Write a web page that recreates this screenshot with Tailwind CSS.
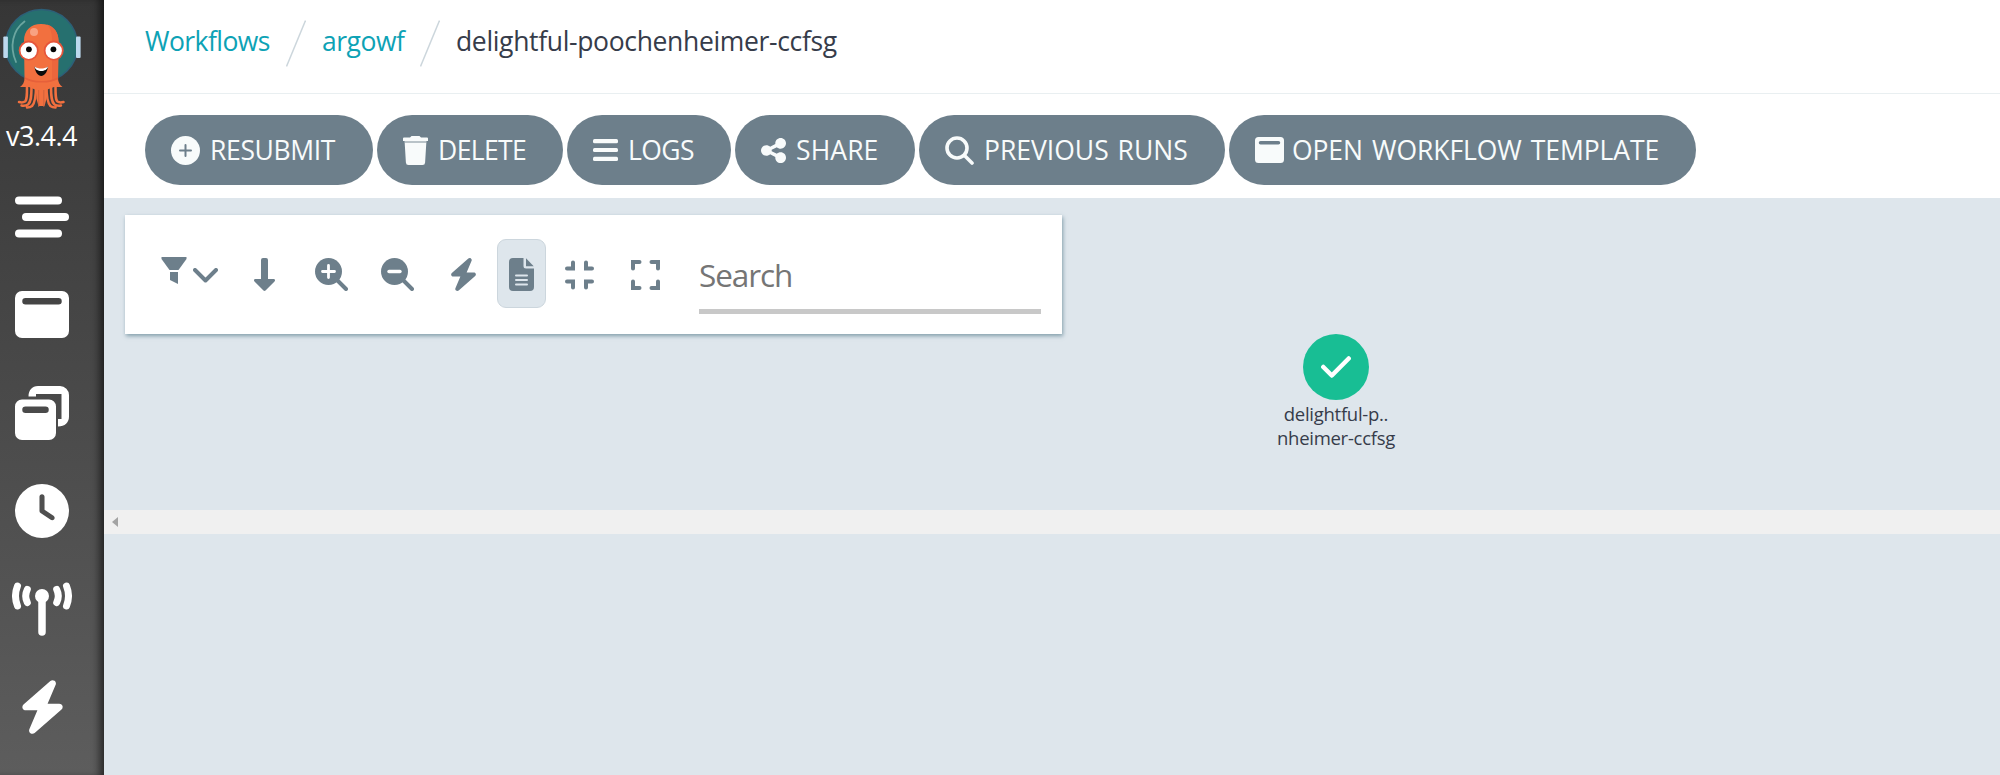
<!DOCTYPE html>
<html lang="en">
<head>
    <meta charset="UTF-8">
    <meta name="viewport" content="width=device-width, initial-scale=1.0">
    <title>Argo Workflows</title>
    <script src="https://cdn.jsdelivr.net/npm/@tailwindcss/browser@4"></script>
</head>
<body class="flex h-screen overflow-hidden bg-[#dee6ec] font-['Open_Sans','Noto_Sans',sans-serif] text-[#363c4a]">

<!-- Sidebar -->
<nav class="flex w-[104px] shrink-0 flex-col bg-linear-to-b from-[#363636] to-[#5d5d5d] text-white shadow-[inset_-8px_0_8px_-4px_rgba(0,0,0,0.6)]">
    <a href="#" class="h-[118px]">
        <svg class="h-[118px] w-[86px]" viewBox="0 0 86 118">
            <circle cx="41.5" cy="45.5" r="36" fill="#26706f" stroke="#2d5f78" stroke-width="1.5"/>
            <rect x="3.3" y="36.5" width="4.600" height="21.500" rx="1" fill="#bcd9ee"/>
            <rect x="76" y="36.5" width="4.600" height="21.500" rx="1" fill="#bcd9ee"/>
            <path d="M24.500 21.500C13 30 9 46 16 62" fill="none" stroke="#6ba6a0" stroke-width="1.800" stroke-linecap="round"/>
            <path d="M24 41C24 30 31 24 41 24s17.500 6 17.500 17L58 78c0 4 1.500 7 4.500 9H54L41 92 29 87h-9c3-2 4.500-5 4.500-9z" fill="#f2703f"/>
            <!-- Tentacles -->
            <path d="M27 86c0 9 0 14-2 15.500-1.500 1-4 1-6 .5M31.500 86c0 11-.5 16-3.500 18.500-1.500 1-4 1.500-6.500 1M36 86c0 12-1 17-4 20-1.500 1.200-3 1.500-5 1.500M55.500 86c0 9 0 14 2 15.500 1.500 1 4 1 6 .5M51 86c0 11 .5 16 3.500 18.500 1.500 1 4 1.500 6.500 1M46.500 86c0 12 1 17 4 20 1.500 1.200 3 1.500 5 1.500" fill="none" stroke="#f2703f" stroke-width="2.500" stroke-linecap="round"/>
            <path d="M36 86h10.500v13l-2 7h-6l-2-7z" fill="#f2703f"/>
            <path d="M38.700 90v17M43.800 90v17" stroke="#c8603c" stroke-width=".8"/>
            <path d="M47 24.500C55 27 58.500 33 58.500 41L58 80H52V40C52 33 50.500 28 47 24.500z" fill="#ec663c"/>
            <path d="M25 78c8 5 25 5 33 0" fill="none" stroke="#e6603a" stroke-width="1.500"/>
            <circle cx="34" cy="32" r="4" fill="#f8a282"/>
            <circle cx="28.700" cy="50.500" r="10" fill="#e6553a"/>
            <circle cx="53.700" cy="50.500" r="10" fill="#e6553a"/>
            <circle cx="28.700" cy="50.800" r="8.200" fill="#fff"/>
            <circle cx="53.700" cy="50.800" r="8.200" fill="#fff"/>
            <circle cx="28.900" cy="49.300" r="2.900" fill="#050505"/>
            <circle cx="53.400" cy="49.300" r="2.900" fill="#050505"/>
            <path d="M34.500 66.500C36 79 46.500 79 48 66.500 44 70.500 38.500 70.500 34.500 66.500z" fill="#0c0c0c"/>
            <path d="M34.500 66.500c1 6 12.500 6 13.500 0-4 2.800-9.500 2.800-13.500 0z" fill="#fff"/>
        </svg>
    </a>
    <div class="h-[50px] pl-[6px] text-[27px] leading-[36px] tracking-[-0.5px]">v3.4.4</div>
    <a href="#" class="flex h-[98px] w-[84px] items-center justify-center">
        <svg class="size-[54px]" viewBox="0 0 54 54" fill="currentColor"><rect x="0" y="6.500" width="47" height="8" rx="4"/><rect x="7" y="23" width="47" height="8" rx="4"/><rect x="0" y="39.500" width="47" height="8" rx="4"/></svg>
    </a>
    <a href="#" class="flex h-[98px] w-[84px] items-center justify-center">
        <svg class="size-[54px]" viewBox="0 0 54 54" fill="currentColor" fill-rule="evenodd"><path d="M7 3h40a7 7 0 0 1 7 7v33a7 7 0 0 1-7 7H7a7 7 0 0 1-7-7V10a7 7 0 0 1 7-7zM10.500 10a3.200 3.200 0 0 0 0 6.500h33a3.200 3.200 0 0 0 0-6.500z"/></svg>
    </a>
    <a href="#" class="flex h-[98px] w-[84px] items-center justify-center">
        <svg class="size-[54px]" viewBox="0 0 54 54" fill="currentColor" fill-rule="evenodd"><path d="M7 13.500h27a7 7 0 0 1 7 7V47a7 7 0 0 1-7 7H7a7 7 0 0 1-7-7V20.500a7 7 0 0 1 7-7zM10.500 20.500a3.200 3.200 0 0 0 0 6.500h20a3.200 3.200 0 0 0 0-6.500z"/><path d="M13.500 10.500C13.500 4.500 17 0 23 0h22a9 9 0 0 1 9 9v21.500c0 6-4 10-11 10v-7.500h3.500V8H21v2.500z"/></svg>
    </a>
    <a href="#" class="flex h-[98px] w-[84px] items-center justify-center">
        <svg class="size-[54px]" viewBox="0 0 512 512" fill="currentColor"><path d="M256 0a256 256 0 1 1 0 512A256 256 0 1 1 256 0zM232 120l0 136c0 8 4 15.500 10.700 20l96 64c11 7.400 25.900 4.400 33.300-6.700s4.400-25.900-6.700-33.300L280 243.200 280 120c0-13.300-10.700-24-24-24s-24 10.700-24 24z"/></svg>
    </a>
    <a href="#" class="flex h-[98px] w-[84px] items-center justify-center">
        <svg class="h-[54px] w-[60px]" viewBox="0 0 60 54" fill="none" stroke="currentColor" stroke-linecap="round"><circle cx="30" cy="14" r="7" fill="currentColor" stroke="none"/><path d="M30 14v36" stroke-width="7.500"/><path d="M15.300 7.500q-3.200 6.500 0 13M44.700 7.500q3.200 6.500 0 13" stroke-width="7"/><path d="M5.500 4q-4 10 0 20M54.500 4q4 10 0 20" stroke-width="7"/></svg>
    </a>
    <a href="#" class="flex h-[98px] w-[84px] items-center justify-center">
        <svg class="h-[54px] w-[47px]" viewBox="0 0 448 512" fill="currentColor"><path d="M349.400 44.600c5.900-13.700 1.500-29.700-10.600-38.500s-28.600-8-39.900 1.800l-256 224c-10 8.800-13.600 22.900-8.900 35.300S50.700 288 64 288l111.500 0L98.600 467.400c-5.900 13.700-1.500 29.700 10.600 38.500s28.600 8 39.900-1.800l256-224c10-8.800 13.600-22.900 8.900-35.300s-16.600-20.700-30-20.700l-111.500 0L349.400 44.600z"/></svg>
    </a>
</nav>

<main class="min-w-0 flex-1">
    <!-- Breadcrumbs -->
    <div class="flex h-[94px] items-start border-b border-[#e9eff1] bg-white pl-[41px] pt-5 text-[26.5px] leading-[42px]">
        <a href="#" class="w-[141px] whitespace-nowrap tracking-[-0.55px] text-[#0da2b5]">Workflows</a>
        <svg class="h-[47px] w-5" viewBox="0 0 20 47" stroke="#ccd6dc" stroke-width="1.500"><path d="M.5 46.500L19.500.5"/></svg>
        <a href="#" class="ml-4 w-[98px] whitespace-nowrap tracking-[-0.5px] text-[#0da2b5]">argowf</a>
        <svg class="h-[47px] w-5" viewBox="0 0 20 47" stroke="#ccd6dc" stroke-width="1.500"><path d="M.5 46.500L19.500.5"/></svg>
        <span class="ml-4 whitespace-nowrap tracking-[-0.34px]">delightful-poochenheimer-ccfsg</span>
    </div>

    <!-- Action buttons -->
    <div class="flex h-[104px] gap-1 bg-white pl-[41px] pt-[21px] text-[26.5px] text-[#f8fbfb]">
        <button class="flex h-[70px] w-[228px] items-center rounded-full bg-[#6d7f8b] pl-[26px]">
            <svg class="mr-2.5 size-[29px]" viewBox="0 0 29 29"><circle cx="14.500" cy="14.500" r="14.500" fill="currentColor"/><path d="M14.500 9v11M9 14.500h11" stroke="#6d7f8b" stroke-width="2" stroke-linecap="round"/></svg>
            <span class="whitespace-nowrap pt-0.5 tracking-[-0.35px]">RESUBMIT</span>
        </button>
        <button class="flex h-[70px] w-[186px] items-center rounded-full bg-[#6d7f8b] pl-[26px]">
            <svg class="mr-2.5 h-[29px] w-[25px]" viewBox="0 0 25 29" fill="currentColor"><path d="M8.500 0h8l1.500 1.500h6a1 1 0 0 1 1 1V5H0V2.500a1 1 0 0 1 1-1h6z"/><path d="M1.500 5h22v2h-22z" opacity=".55"/><path d="M1.700 7h21.600l-1.200 19.500a2.600 2.600 0 0 1-2.600 2.500h-14a2.600 2.600 0 0 1-2.600-2.500z"/></svg>
            <span class="whitespace-nowrap pt-0.5 tracking-[-0.6px]">DELETE</span>
        </button>
        <button class="flex h-[70px] w-[164px] items-center rounded-full bg-[#6d7f8b] pl-[26px]">
            <svg class="mr-2.5 h-[22px] w-[25px]" viewBox="0 0 25 22" fill="currentColor"><rect width="25" height="4.200" rx="1.500"/><rect y="8.900" width="25" height="4.200" rx="1.500"/><rect y="17.800" width="25" height="4.200" rx="1.500"/></svg>
            <span class="whitespace-nowrap pt-0.5 tracking-[-0.6px]">LOGS</span>
        </button>
        <button class="flex h-[70px] w-[180px] items-center rounded-full bg-[#6d7f8b] pl-[26px]">
            <svg class="mr-2.5 h-[29px] w-[25px]" viewBox="0 0 448 512" fill="currentColor"><path d="M352 224c53 0 96-43 96-96s-43-96-96-96s-96 43-96 96c0 4 .2 8 .7 11.900l-94.100 47C145.400 170.200 121.900 160 96 160c-53 0-96 43-96 96s43 96 96 96c25.900 0 49.400-10.200 66.600-26.900l94.100 47c-.5 3.900-.7 7.800-.7 11.900c0 53 43 96 96 96s96-43 96-96s-43-96-96-96c-25.900 0-49.400 10.200-66.600 26.900l-94.100-47c.5-3.900 .7-7.800 .7-11.900s-.2-8-.7-11.900l94.100-47C302.600 213.800 326.100 224 352 224z"/></svg>
            <span class="whitespace-nowrap pt-0.5 tracking-[0.1px]">SHARE</span>
        </button>
        <button class="flex h-[70px] w-[306px] items-center rounded-full bg-[#6d7f8b] pl-[26px]">
            <svg class="mr-2.5 size-[29px]" viewBox="0 0 29 29" fill="none" stroke="currentColor" stroke-width="3.600" stroke-linecap="round"><circle cx="12" cy="12" r="10"/><path d="M19.500 19.500l7.500 7.500"/></svg>
            <span class="whitespace-nowrap pt-0.5 tracking-[0px] [word-spacing:2px]">PREVIOUS RUNS</span>
        </button>
        <button class="flex h-[70px] w-[467px] items-center rounded-full bg-[#6d7f8b] pl-[26px]">
            <svg class="mr-2 h-[26px] w-[29px]" viewBox="0 0 29 26" fill="currentColor" fill-rule="evenodd"><path d="M3.500 0h22A3.500 3.500 0 0 1 29 3.500v19a3.500 3.500 0 0 1-3.500 3.500h-22A3.500 3.500 0 0 1 0 22.500v-19A3.500 3.500 0 0 1 3.500 0zM5.500 4a1.700 1.700 0 0 0 0 3.500h18a1.700 1.700 0 0 0 0-3.500z"/></svg>
            <span class="whitespace-nowrap pt-0.5 tracking-[-0.1px] [word-spacing:2.500px]">OPEN WORKFLOW TEMPLATE</span>
        </button>
    </div>

    <!-- Workflow graph -->
    <div class="relative h-[312px]">
        <div class="ml-[21px] flex h-[136px] w-[937px] pt-[17px]">
            <div class="flex h-[119px] w-full bg-white pl-9 text-[#6d7f8b] shadow-[1px_2px_4px_rgba(100,135,150,0.75)]">
                <a href="#" class="mt-[41px] flex w-[93px]">
                    <svg class="h-[29px] w-[26px]" viewBox="0 0 26 29" fill="currentColor"><path d="M.5 1h25v2L17.500 14h-9L.5 3z"/><path d="M9 16h8v12l-8-4z"/></svg>
                    <svg class="ml-1.5 mt-[12px] h-[15px] w-[25px]" viewBox="0 0 25 15" fill="none" stroke="currentColor" stroke-width="4" stroke-linecap="round" stroke-linejoin="round"><path d="M2 2l10.500 10.500L23 2"/></svg>
                </a>
                <a href="#" class="mt-[43px] w-[61px]">
                    <svg class="h-[33px] w-[21px]" viewBox="0 0 21 33" fill="currentColor"><path d="M9 0h3a2 2 0 0 1 2 2v19h5.500c1.500 0 2 1.500 1 2.500l-9 9a1.500 1.500 0 0 1-2 0l-9-9c-1-1-.5-2.500 1-2.500H7V2a2 2 0 0 1 2-2z"/></svg>
                </a>
                <a href="#" class="mt-[43px] w-[66px]">
                    <svg class="size-[33px]" viewBox="0 0 33 33"><circle cx="13.500" cy="13.500" r="13.500" fill="currentColor"/><path d="M21 21l10 10" stroke="currentColor" stroke-width="4" stroke-linecap="round"/><path d="M13.500 7.500v12M7.500 13.500h12" stroke="#fff" stroke-width="2.800" stroke-linecap="round"/></svg>
                </a>
                <a href="#" class="mt-[43px] w-[70px]">
                    <svg class="size-[33px]" viewBox="0 0 33 33"><circle cx="13.500" cy="13.500" r="13.500" fill="currentColor"/><path d="M21 21l10 10" stroke="currentColor" stroke-width="4" stroke-linecap="round"/><path d="M8 13.500h11" stroke="#fff" stroke-width="3.400" stroke-linecap="round"/></svg>
                </a>
                <a href="#" class="mt-[43px] w-[46px]">
                    <svg class="-ml-0.5 h-[33px] w-[29px]" viewBox="0 0 448 512" fill="currentColor"><path d="M349.400 44.600c5.900-13.700 1.500-29.700-10.600-38.500s-28.600-8-39.900 1.800l-256 224c-10 8.800-13.600 22.900-8.900 35.300S50.700 288 64 288l111.500 0L98.600 467.400c-5.900 13.700-1.500 29.700 10.600 38.500s28.600 8 39.900-1.800l256-224c10-8.800 13.600-22.900 8.900-35.300s-16.600-20.700-30-20.700l-111.500 0L349.400 44.600z"/></svg>
                </a>
                <a href="#" class="mt-6 flex h-[69px] w-[49px] items-center justify-center rounded-[9px] border border-[#ccd6dd] bg-[#dee6ec] pt-0.5">
                    <svg class="h-[33px] w-[25px]" viewBox="0 0 25 33" fill="currentColor"><path d="M4 0h10.500v8a2.500 2.500 0 0 0 2.500 2.500h8V29a4 4 0 0 1-4 4H4a4 4 0 0 1-4-4V4a4 4 0 0 1 4-4z"/><path d="M17 .3l7.700 7.900H17z"/><path d="M7 17.500h11M7 22h11M7 26.500h11" stroke="#dee6ec" stroke-width="2" stroke-linecap="round"/></svg>
                </a>
                <a href="#" class="ml-[19px] mt-[45px] w-[66px]">
                    <svg class="h-[30px] w-[29px]" viewBox="0 0 29 30" fill="none" stroke="currentColor" stroke-width="4" stroke-linecap="round"><path d="M8 2.500V8.500H2M21 2.500V8.500h6M8 27.500V21.500H2M21 27.500V21.500h6"/></svg>
                </a>
                <a href="#" class="mt-[45px] w-[68px]">
                    <svg class="h-[30px] w-[29px]" viewBox="0 0 29 30" fill="none" stroke="currentColor" stroke-width="4" stroke-linecap="round"><path d="M2 8.500v-6.500H8.500M20.500 2H27v6.500M2 21.500V28H8.500M20.500 28H27v-6.500"/></svg>
                </a>
                <input type="text" placeholder="Search" class="mt-5 h-[79px] w-[342px] border-b-[5px] border-[#c8c8c8] pt-[5px] text-[31.5px] tracking-[-1.1px] outline-none placeholder:text-[#757575]">
            </div>
        </div>

        <!-- Graph node -->
        <div class="absolute left-[1172px] top-[136px] flex w-[120px] flex-col items-center">
            <div class="flex size-[66px] items-center justify-center rounded-full bg-[#18be94]">
                <svg class="h-[22px] w-[30px]" viewBox="0 0 30 22" fill="none" stroke="#fff" stroke-width="4.500" stroke-linecap="round" stroke-linejoin="round"><path d="M2.300 11l8.500 8.500L27.700 2.500"/></svg>
            </div>
            <div class="mt-0.5 whitespace-nowrap text-center text-[18.5px] leading-[23.5px] tracking-[-0.28px]">delightful-p..<br>nheimer-ccfsg</div>
        </div>
    </div>

    <!-- Horizontal scrollbar -->
    <div class="flex h-6 items-center bg-[#f0f0f0] pl-2">
        <svg class="h-[10px] w-[6px]" viewBox="0 0 6 10" fill="#a3a3a3"><path d="M6 0v10L0 5z"/></svg>
    </div>
</main>

</body>
</html>
